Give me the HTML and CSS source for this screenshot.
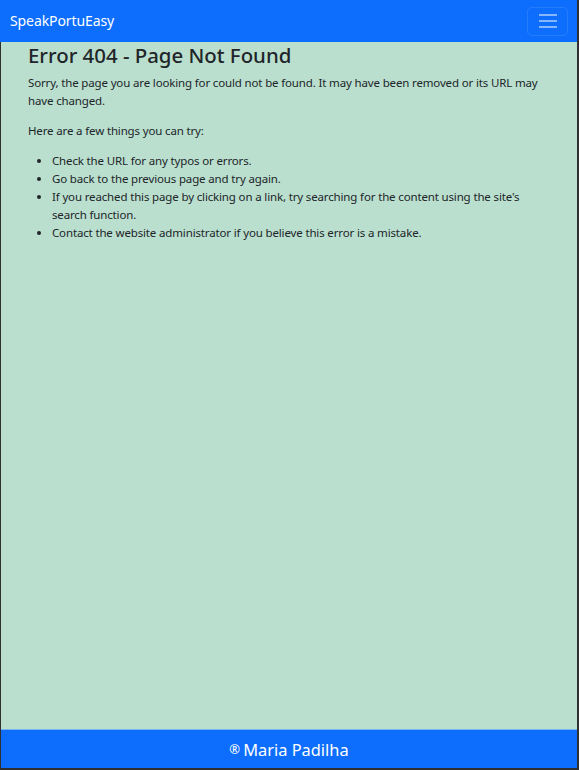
FILE: index.html
```html
<!DOCTYPE html>
<html lang="en">
<head>
<meta charset="utf-8">
<title>SpeakPortuEasy - 404</title>
<link rel="stylesheet" href="styles.css">
</head>
<body>
<div class="page">
  <nav class="navbar">
    <a class="brand" href="#">SpeakPortuEasy</a>
    <button class="toggler" type="button" aria-label="Toggle navigation">
      <span class="bar"></span><span class="bar"></span><span class="bar"></span>
    </button>
  </nav>
  <main class="main">
    <div class="container">
      <h1 class="title">Error 404 - Page Not Found</h1>
      <p class="text">Sorry, the page you are looking for could not be found. It may have been removed or its URL may have changed.</p>
      <p class="text">Here are a few things you can try:</p>
      <ul class="list">
        <li>Check the URL for any typos or errors.</li>
        <li>Go back to the previous page and try again.</li>
        <li>If you reached this page by clicking on a link, try searching for the content using the site's search function.</li>
        <li>Contact the website administrator if you believe this error is a mistake.</li>
      </ul>
    </div>
  </main>
  <footer class="footer">
    <span class="reg">®</span><span class="name">Maria Padilha</span>
  </footer>
</div>
</body>
</html>
```

FILE: styles.css
```css
html, body {
  margin: 0;
  padding: 0;
  background: #2f2f2f;
  height: 770px;
  overflow: hidden;
}
body {
  font-family: "Noto Sans", "Open Sans", sans-serif;
  color: #212529;
}
.page {
  width: 577px;
  height: 768px;
  display: flex;
  flex-direction: column;
}
.navbar {
  height: 42px;
  flex: 0 0 42px;
  background: #0d6efd;
  display: flex;
  align-items: center;
  justify-content: space-between;
  padding: 0 9px 0 10px;
  box-sizing: border-box;
}
.brand {
  color: #fff;
  text-decoration: none;
  font-size: 14px;
  letter-spacing: -0.1px;
  line-height: 20px;
}
.toggler {
  width: 41px;
  height: 29px;
  box-sizing: border-box;
  border: 1px solid rgba(255,255,255,0.1);
  border-radius: 5px;
  background: transparent;
  display: flex;
  flex-direction: column;
  justify-content: center;
  align-items: center;
  gap: 4px;
  padding: 0;
}
.bar {
  display: block;
  width: 18px;
  height: 2px;
  background: rgba(255,255,255,0.5);
}
.main {
  flex: 1 1 auto;
  margin-left: 1px;
  background: #badfce;
}
.container {
  width: 540px;
  margin: 0 auto;
  padding: 0 9px 0 9px;
  box-sizing: border-box;
}
.title {
  margin: 0 0 6px;
  font-size: 20.4px;
  line-height: 26px;
  font-weight: 500;
}
.text {
  margin: 0 0 12px;
  font-size: 11.5px;
  letter-spacing: -0.15px;
  line-height: 18px;
}
.list {
  margin: 0;
  padding-left: 24px;
  font-size: 11.5px;
  letter-spacing: -0.15px;
  line-height: 18px;
}
.footer {
  flex: 0 0 38px;
  margin-left: 1px;
  background: #0d6efd;
  border-top: 1px solid #79b3ee;
  display: flex;
  align-items: center;
  justify-content: center;
  color: #fff;
}
.reg {
  font-size: 13px;
  margin-right: 3px;
}
.name {
  font-size: 16.4px;
}
```
